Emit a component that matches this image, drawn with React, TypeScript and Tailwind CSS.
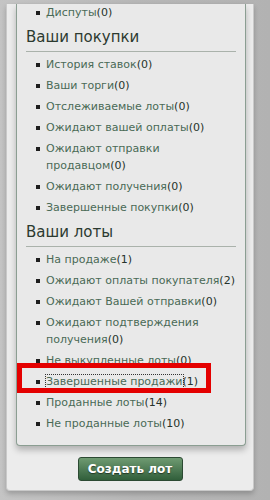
const purchases = [
  { label: "История ставок", count: 0 },
  { label: "Ваши торги", count: 0 },
  { label: "Отслеживаемые лоты", count: 0 },
  { label: "Ожидают вашей оплаты", count: 0 },
  { label: "Ожидают отправки продавцом", count: 0 },
  { label: "Ожидают получения", count: 0 },
  { label: "Завершенные покупки", count: 0 },
];

const lots = [
  { label: "На продаже", count: 1 },
  { label: "Ожидают оплаты покупателя", count: 2 },
  { label: "Ожидают Вашей отправки", count: 0 },
  { label: "Ожидают подтверждения получения", count: 0 },
  { label: "Не выкупленные лоты", count: 0 },
  { label: "Завершенные продажи", count: 1, active: true },
  { label: "Проданные лоты", count: 14 },
  { label: "Не проданные лоты", count: 10 },
];

type Item = { label: string; count: number; active?: boolean };

const MenuItem = ({ item }: { item: Item }) => (
  <li className="relative mt-[4px] flex leading-[17px]">
    <span className="mt-[7px] mr-[6px] h-[4px] w-[4px] shrink-0 bg-[#1e1e1e]" />
    <a className="cursor-pointer text-[#4a6a56]">
      <span
        className={
          item.active ? "outline-1 outline-dotted outline-[#333]" : undefined
        }
      >
        {item.label}
      </span>
      <span className="text-[#26332b]">({item.count})</span>
    </a>
    {item.active && (
      <span className="pointer-events-none absolute top-[-10px] left-[-19px] h-[30px] w-[194px] border-[5px] border-[#e40000]" />
    )}
  </li>
);

const Section = ({ title, items }: { title: string; items: Item[] }) => (
  <>
    <h2 className="mx-[9px] mt-[4px] border-b border-[#aab2ab] pt-[1px] pb-[3px] text-[15px] leading-[22px] text-[#2c3a30]">
      {title}
    </h2>
    <ul className="pr-[8px] pl-[19px]">
      {items.map((item) => (
        <MenuItem key={item.label} item={item} />
      ))}
    </ul>
  </>
);

export default function App() {
  return (
    <div
      className="h-[500px] w-[270px] overflow-hidden bg-gradient-to-r from-[#c4c4c4] via-[#b7b7b7] to-[#b2b2b2] text-[11px]"
      style={{ fontFamily: '"DejaVu Sans", Verdana, sans-serif' }}
    >
      <div className="ml-[6px] w-[248px] rounded-b-[4px] border-x border-b border-[#c9c9c9] bg-[#ececec] pb-[9px] shadow-[0_3px_5px_rgba(0,0,0,0.2)]">
        <div className="ml-[9px] w-[230px] rounded-b-[4px] border-x border-b border-[#8b9e92] bg-[#e9e9e9] pb-[13px] shadow-[0_4px_6px_rgba(0,0,0,0.25)]">
          <ul className="pr-[8px] pl-[19px]">
            <MenuItem item={{ label: "Диспуты", count: 0 }} />
          </ul>
          <Section title="Ваши покупки" items={purchases} />
          <Section title="Ваши лоты" items={lots} />
        </div>
        <div className="mt-[11px] flex justify-center">
          <button className="h-[24px] w-[105px] rounded-[3px] border border-[#2c4a33] bg-gradient-to-b from-[#6f9b72] to-[#315f3b] text-[12px] font-bold text-white [text-shadow:0_1px_1px_rgba(0,0,0,0.5)]">
            Создать лот
          </button>
        </div>
      </div>
    </div>
  );
}
